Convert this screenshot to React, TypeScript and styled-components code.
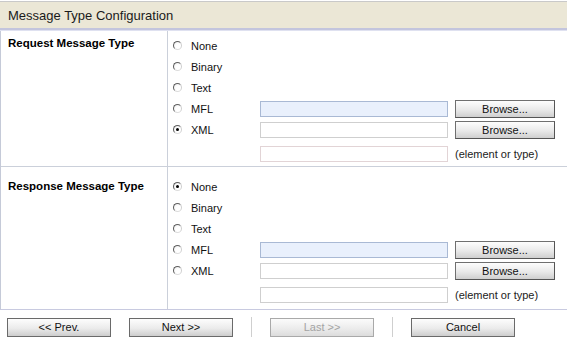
import styled, { createGlobalStyle } from 'styled-components';

const GlobalStyle = createGlobalStyle`
  html, body {
    margin: 0;
    padding: 0;
    background: #fff;
  }
  body {
    font-family: "Liberation Sans", Arial, sans-serif;
    font-size: 11px;
    color: #000;
  }
`;

type Kind = 'None' | 'Binary' | 'Text' | 'MFL' | 'XML';

const KINDS: Kind[] = ['None', 'Binary', 'Text', 'MFL', 'XML'];

const Page = styled.div`
  width: 567px;
  padding-top: 1px;
`;

const Header = styled.div`
  height: 26px;
  display: flex;
  align-items: center;
  padding-left: 8px;
  font-size: 13px;
  color: #1a1a1a;
  background: #ebe7d6;
  border-top: 1px solid #c9c9c9;
  border-bottom: 2px solid #c3c5dd;
  box-shadow: 0 1px 0 #dfe1f0;
  margin-bottom: 1px;
`;

const Table = styled.div`
  border-left: 1px solid #c5cad8;
  border-bottom: 1px solid #c8cae0;
`;

const Section = styled.div<{ $last?: boolean }>`
  display: grid;
  grid-template-columns: 167px 1fr;
  border-bottom: ${(p) => (p.$last ? 'none' : '1px solid #cbd0da')};
`;

const LabelCell = styled.div<{ $top: number }>`
  border-right: 1px solid #cbd0da;
  padding: ${(p) => p.$top}px 0 0 7px;
  font-weight: bold;
  font-size: 11.5px;
  line-height: 13px;
  color: #000;
`;

const Options = styled.div<{ $top: number; $bottom: number }>`
  display: flex;
  flex-direction: column;
  padding: ${(p) => p.$top}px 0 ${(p) => p.$bottom}px 5px;
`;

const Row = styled.div<{ $gap?: boolean }>`
  height: 21px;
  display: grid;
  grid-template-columns: 80px 188px 100px;
  column-gap: 7px;
  align-items: center;
  margin-top: ${(p) => (p.$gap ? 3 : 0)}px;
`;

const Choice = styled.label`
  display: flex;
  align-items: center;
  gap: 9px;
  color: #111;
`;

const Radio = styled.span<{ $checked?: boolean }>`
  position: relative;
  width: 9px;
  height: 9px;
  box-sizing: border-box;
  border-radius: 50%;
  border: 1px solid;
  border-color: #5e5e5e #cfcfcf #dcdcdc #5e5e5e;
  background: radial-gradient(circle at 60% 60%, #ffffff 40%, #e4e4e4 100%);

  &::after {
    content: '';
    display: ${(p) => (p.$checked ? 'block' : 'none')};
    position: absolute;
    left: 2px;
    top: 2px;
    width: 3px;
    height: 3px;
    border-radius: 50%;
    background: #000;
  }
`;

const Field = styled.div<{ $tone: 'blue' | 'plain' | 'pink' }>`
  height: 16px;
  box-sizing: border-box;
  border: 1px solid
    ${(p) => (p.$tone === 'blue' ? '#a9b9d4' : p.$tone === 'pink' ? '#e2d4d6' : '#cfcfcf')};
  background: ${(p) => (p.$tone === 'blue' ? '#e9f0fc' : '#fff')};
`;

const BrowseButton = styled.button`
  height: 18px;
  box-sizing: border-box;
  padding: 0;
  border: 1px solid #6f6f6f;
  border-right-color: #555;
  border-bottom-color: #555;
  background: linear-gradient(#fdfdfd, #e9e9e9 55%, #cfcfcf);
  font-family: inherit;
  font-size: 11px;
  color: #111;
`;

const Hint = styled.span`
  color: #222;
  white-space: nowrap;
`;

const Footer = styled.div`
  display: flex;
  align-items: center;
  gap: 18px;
  padding: 7px 0 0 7px;
`;

const NavButton = styled.button<{ $disabled?: boolean }>`
  width: 104px;
  height: 19px;
  box-sizing: border-box;
  padding: 0;
  border: 1px solid ${(p) => (p.$disabled ? '#a9a9a9' : '#6a6a6a')};
  background: ${(p) =>
    p.$disabled
      ? 'linear-gradient(#fbfbfb, #ececec 55%, #dcdcdc)'
      : 'linear-gradient(#fdfdfd, #ebebeb 55%, #cdcdcd)'};
  font-family: inherit;
  font-size: 11px;
  color: ${(p) => (p.$disabled ? '#a3a3a3' : '#111')};
`;

const Separator = styled.span`
  width: 1px;
  height: 20px;
  background: #cfcfcf;
`;

type SectionProps = {
  label: string;
  selected: Kind;
  labelTop: number;
  top: number;
  bottom: number;
  hintTone: 'plain' | 'pink';
  last?: boolean;
};

const MessageSection = ({ label, selected, labelTop, top, bottom, hintTone, last }: SectionProps) => (
  <Section $last={last}>
    <LabelCell $top={labelTop}>{label}</LabelCell>
    <Options $top={top} $bottom={bottom}>
      {KINDS.map((kind) => (
        <Row key={kind}>
          <Choice>
            <Radio $checked={kind === selected} />
            {kind}
          </Choice>
          {kind === 'MFL' && <Field $tone="blue" />}
          {kind === 'XML' && <Field $tone="plain" />}
          {(kind === 'MFL' || kind === 'XML') && <BrowseButton>Browse...</BrowseButton>}
        </Row>
      ))}
      <Row $gap>
        <span />
        <Field $tone={hintTone} />
        <Hint>(element or type)</Hint>
      </Row>
    </Options>
  </Section>
);

const App = () => {
  return (
    <Page>
      <GlobalStyle />
      <Header>Message Type Configuration</Header>
      <Table>
        <MessageSection
          label="Request Message Type"
          selected="XML"
          labelTop={6}
          top={4}
          bottom={2}
          hintTone="pink"
        />
        <MessageSection
          label="Response Message Type"
          selected="None"
          labelTop={13}
          top={9}
          bottom={4}
          hintTone="plain"
          last
        />
      </Table>
      <Footer>
        <NavButton>&lt;&lt; Prev.</NavButton>
        <NavButton>Next &gt;&gt;</NavButton>
        <Separator />
        <NavButton $disabled>Last &gt;&gt;</NavButton>
        <Separator />
        <NavButton>Cancel</NavButton>
      </Footer>
    </Page>
  );
};

export default App;
